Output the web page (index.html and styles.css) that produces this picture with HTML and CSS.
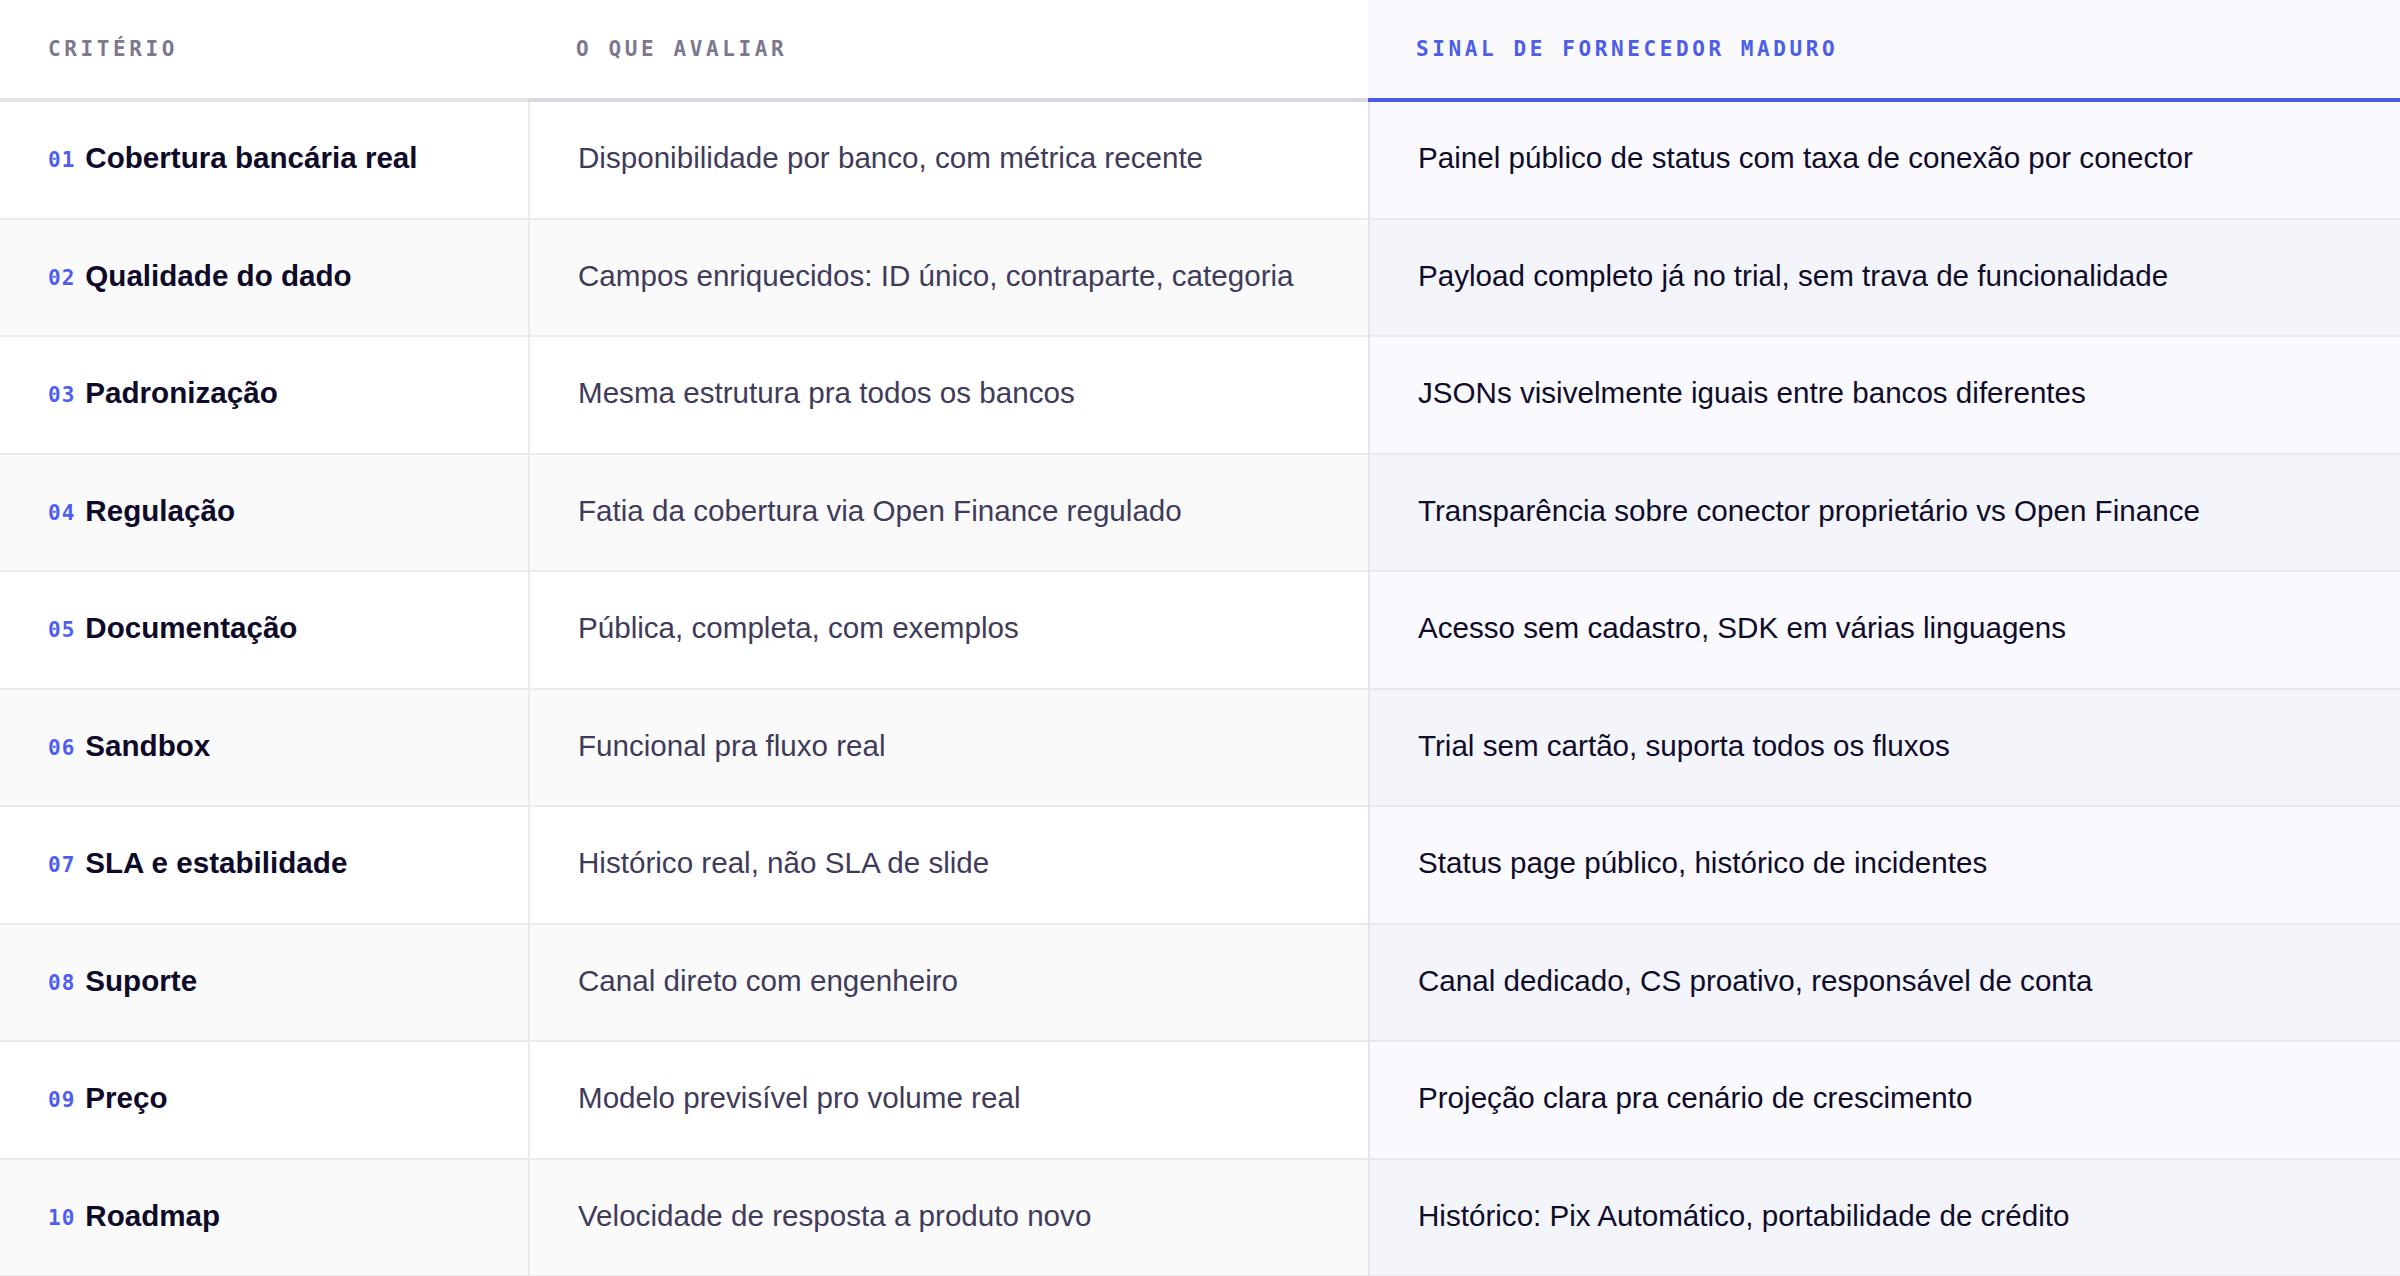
FILE: index.html
```html
<!DOCTYPE html>
<html lang="pt-BR">
<head>
<meta charset="utf-8">
<title>Critérios de avaliação</title>
<link rel="stylesheet" href="styles.css">
</head>
<body>
<div class="table">
  <div class="row head">
    <div class="cell c1"><span class="label">CRITÉRIO</span></div>
    <div class="cell c2"><span class="label">O QUE AVALIAR</span></div>
    <div class="cell c3"><span class="label accent">SINAL DE FORNECEDOR MADURO</span></div>
  </div>
  <div class="row">
    <div class="cell c1"><span class="num">01</span><span class="title">Cobertura bancária real</span></div>
    <div class="cell c2">Disponibilidade por banco, com métrica recente</div>
    <div class="cell c3">Painel público de status com taxa de conexão por conector</div>
  </div>
  <div class="row alt">
    <div class="cell c1"><span class="num">02</span><span class="title">Qualidade do dado</span></div>
    <div class="cell c2">Campos enriquecidos: ID único, contraparte, categoria</div>
    <div class="cell c3">Payload completo já no trial, sem trava de funcionalidade</div>
  </div>
  <div class="row">
    <div class="cell c1"><span class="num">03</span><span class="title">Padronização</span></div>
    <div class="cell c2">Mesma estrutura pra todos os bancos</div>
    <div class="cell c3">JSONs visivelmente iguais entre bancos diferentes</div>
  </div>
  <div class="row alt">
    <div class="cell c1"><span class="num">04</span><span class="title">Regulação</span></div>
    <div class="cell c2">Fatia da cobertura via Open Finance regulado</div>
    <div class="cell c3">Transparência sobre conector proprietário vs Open Finance</div>
  </div>
  <div class="row">
    <div class="cell c1"><span class="num">05</span><span class="title">Documentação</span></div>
    <div class="cell c2">Pública, completa, com exemplos</div>
    <div class="cell c3">Acesso sem cadastro, SDK em várias linguagens</div>
  </div>
  <div class="row alt">
    <div class="cell c1"><span class="num">06</span><span class="title">Sandbox</span></div>
    <div class="cell c2">Funcional pra fluxo real</div>
    <div class="cell c3">Trial sem cartão, suporta todos os fluxos</div>
  </div>
  <div class="row">
    <div class="cell c1"><span class="num">07</span><span class="title">SLA e estabilidade</span></div>
    <div class="cell c2">Histórico real, não SLA de slide</div>
    <div class="cell c3">Status page público, histórico de incidentes</div>
  </div>
  <div class="row alt">
    <div class="cell c1"><span class="num">08</span><span class="title">Suporte</span></div>
    <div class="cell c2">Canal direto com engenheiro</div>
    <div class="cell c3">Canal dedicado, CS proativo, responsável de conta</div>
  </div>
  <div class="row">
    <div class="cell c1"><span class="num">09</span><span class="title">Preço</span></div>
    <div class="cell c2">Modelo previsível pro volume real</div>
    <div class="cell c3">Projeção clara pra cenário de crescimento</div>
  </div>
  <div class="row alt">
    <div class="cell c1"><span class="num">10</span><span class="title">Roadmap</span></div>
    <div class="cell c2">Velocidade de resposta a produto novo</div>
    <div class="cell c3">Histórico: Pix Automático, portabilidade de crédito</div>
  </div>
</div>
</body>
</html>
```

FILE: styles.css
```css
* { box-sizing: border-box; }

html, body {
  margin: 0;
  padding: 0;
  background: #ffffff;
}

body {
  font-family: "Liberation Sans", Arial, sans-serif;
  overflow: hidden;
}

.table {
  display: flex;
  flex-direction: column;
  width: 2400px;
}

.row {
  display: grid;
  grid-template-columns: 528px 840px 1032px;
  height: 117.5px;
}

.cell {
  display: flex;
  align-items: center;
  padding: 0 48px 3.4px;
  font-size: 29.6px;
  white-space: nowrap;
  border-bottom: 2px solid #ebebef;
  background: #ffffff;
}

.cell.c2 {
  border-left: 2px solid #ebebef;
  color: #3f3b5a;
}

.cell.c3 {
  border-left: 2px solid #e4e4ed;
  background: #f9f9fe;
  color: #0f0c2a;
  border-bottom-color: #e7e7ef;
}

.row.alt .cell { background: #fafafb; }
.row.alt .cell.c3 { background: #f4f5fb; }

/* header */
.row.head {
  height: 102px;
}

.row.head .cell {
  padding: 0 48px 0;
  border-left: none;
  border-bottom: 4px solid #e4e4e9;
}

.row.head .cell.c2 { border-bottom-color: #d9d8e0; }
.row.head .cell.c3 {
  border-bottom-color: #4a5ce8;
  background: #f9f9fe;
}

.label {
  font-family: "DejaVu Sans Mono", monospace;
  font-weight: bold;
  font-size: 21px;
  letter-spacing: 3.6px;
  color: #7d7890;
}

.label.accent { color: #4b5de9; }

.num {
  font-family: "DejaVu Sans Mono", monospace;
  font-weight: bold;
  font-size: 21px;
  letter-spacing: 1px;
  color: #4d5ef0;
  margin-right: 10px;
  padding-top: 4px;
}

.title {
  font-weight: bold;
  color: #0e0b2a;
}
```
